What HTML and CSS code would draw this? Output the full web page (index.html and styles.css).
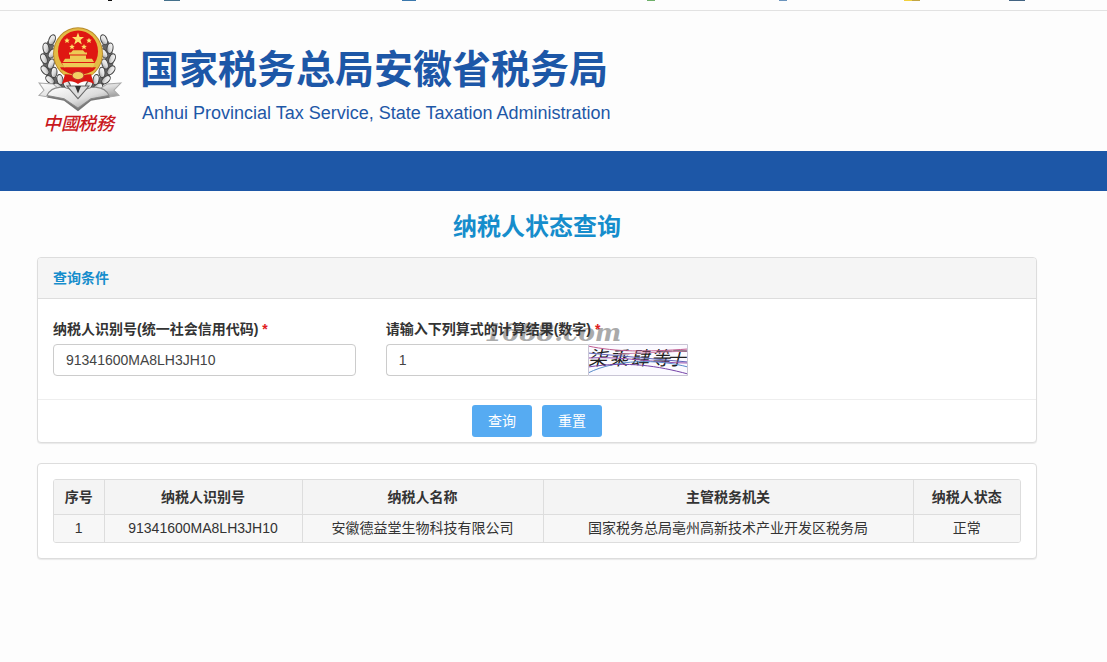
FILE: index.html
```html
<!DOCTYPE html>
<html lang="zh-CN">
<head>
<meta charset="utf-8">
<title>纳税人状态查询</title>
<link rel="stylesheet" href="styles.css">
</head>
<body>
<div class="strip">
  <svg width="1107" height="2" viewBox="0 0 1107 2" aria-hidden="true">
    <path fill="#111" d="M108 0h4v1h-4z"/><path fill="#45718c" d="M164 0h16v1h-16z"/>
    <path fill="#3b78ad" d="M402 0h14v1h-14z"/><path fill="#6fb06a" d="M647 0h8v1h-8z"/>
    <path fill="#6b94bd" d="M779 0h8v1h-8z"/><path fill="#f2d13c" d="M904 0h8v1h-8z"/>
    <path fill="#c2a544" d="M912 0h8v1h-8z"/><path fill="#426382" d="M1009 0h16v1h-16z"/>
  </svg>
</div>
<header class="masthead">
  <svg class="emblem" width="88" height="110" viewBox="0 0 88 110" role="img" aria-label="中国税务">
    <defs>
      <linearGradient id="silver" x1="0" y1="0" x2="1" y2="1">
        <stop offset="0" stop-color="#fff"/><stop offset=".55" stop-color="#ddd"/><stop offset="1" stop-color="#888"/>
      </linearGradient>
      <ellipse id="leaf" rx="3" ry="5" fill="url(#silver)" stroke="#444"/>
      <g id="branch">
        <path d="M15 20C6 36 10 55 32 67" fill="none" stroke="#666" stroke-width="8"/>
        <use href="#leaf" transform="translate(16 17) rotate(25)"/>
        <use href="#leaf" transform="translate(10 25) rotate(-10)"/>
        <use href="#leaf" transform="translate(16 30) rotate(35)"/>
        <use href="#leaf" transform="translate(8 35) rotate(-25)"/>
        <use href="#leaf" transform="translate(15 40) rotate(20)"/>
        <use href="#leaf" transform="translate(9 46) rotate(-42)"/>
        <use href="#leaf" transform="translate(18 48) rotate(5)"/>
        <use href="#leaf" transform="translate(14 55) rotate(-50)"/>
        <use href="#leaf" transform="translate(24 55) rotate(-12)"/>
        <use href="#leaf" transform="translate(22 62) rotate(-60)"/>
        <use href="#leaf" transform="translate(31 60) rotate(-30)"/>
      </g>
    </defs>
    <g transform="translate(-1 -4) scale(1 1.05)">
      <use href="#branch"/>
      <use href="#branch" transform="translate(84 0) scale(-1 1)"/>
      <path d="M3 58l14 1 10 8-4 6-20-3 5-5zM85 58l-14 1-12 8 4 6 20-3-5-5z" fill="url(#silver)" stroke="#aaa"/>
      <path d="M11 72c6-8 16-9 31-1 15-8 25-7 32 1l-19 3-13 10-14-10z" fill="#777"/>
      <path d="M11 70c5-10 18-10 31-2 13-8 26-8 31 2l-18 3-13 9-14-9z" fill="url(#silver)" stroke="#888"/>
      <path d="M31 61l11 12 11-12z" fill="#ddd" stroke="#666"/><path d="M39 61h6l-3 7z" fill="#333"/>
      <circle cx="42" cy="30" r="25" fill="#b98c2c"/>
      <circle cx="42" cy="30" r="24" fill="#e3bb45"/>
      <path d="M24 43l5 7-3 9c7-4 11-3 16 0 5-3 9-4 16 0l-3-9 5-7z" fill="#d91712"/>
      <circle cx="42" cy="28" r="20" fill="#df1712"/>
      <path d="M42 10l1.6 4.2 4.4.1-3.5 2.8 1.3 4.3-3.8-2.5-3.8 2.5 1.3-4.3-3.5-2.8 4.4-.1z" fill="#ffdf68"/>
      <g fill="#ffdf68"><path id="star" d="M31 15l.8 1.7 2 .1-1.5 1.3.5 1.9-1.8-1-1.8 1 .5-1.9-1.5-1.3 2-.1z"/>
        <use href="#star" x="22"/><use href="#star" x="5" y="6"/><use href="#star" x="17" y="6"/></g>
      <path d="M35 29l2-2h10l2 2h2v2H33v-2zM34 32h16v3h6l2 3H27l2-3h5zM26 39h33l-2 4H28z" fill="#edcb55"/>
      <path d="M26 45c5 4 10 5 16 5s12-1 17-5l-2 5c-5-1-11 1-15 3-4-2-10-4-15-3z" fill="#e5bd43"/>
      <ellipse cx="42" cy="51" rx="6" ry="4" fill="#f2d265" stroke="#c0302a"/>
    </g>
    <text class="emblem-text" y="104"><tspan x="6">中</tspan><tspan x="24">國</tspan><tspan x="41">税</tspan><tspan x="59">務</tspan></text>
  </svg>
  <div class="brand">
    <div class="brand-name">国家税务总局安徽省税务局</div>
    <div class="brand-en">Anhui Provincial Tax Service, State Taxation Administration</div>
  </div>
</header>
<nav class="navbar" aria-label="主导航"></nav>
<main class="content">
  <h1 class="page-title">纳税人状态查询</h1>
  <form class="panel">
    <h2 class="panel-heading">查询条件</h2>
    <div class="fields">
      <div class="field">
        <label for="taxpayer">纳税人识别号(统一社会信用代码) <span class="required">*</span></label>
        <input class="control" id="taxpayer" type="text" value="91341600MA8LH3JH10">
      </div>
      <div class="field">
        <span class="watermark" aria-hidden="true">1688.com</span>
        <label for="answer">请输入下列算式的计算结果(数字) <span class="required">*</span></label>
        <div class="control-group">
          <input class="control" id="answer" type="text" value="1">
          <svg class="captcha" width="100" height="32" viewBox="0 0 100 32" role="img" aria-label="柒乘肆等于">
            <rect width="100" height="32" fill="#fbfaff"/>
            <text class="captcha-text" y="21"><tspan x="0">柒</tspan><tspan x="21">乘</tspan><tspan x="42">肆</tspan><tspan x="63">等</tspan><tspan x="79">于</tspan></text>
            <g fill="none">
              <path stroke="#c05c91" d="M0 2c28 6 58 6 100 3"/>
              <path stroke="#6265b9" d="M0 9l100 9"/>
              <path stroke="#9851ae" d="M0 14c35-2 65 5 100 5"/>
              <path stroke="#588bc8" d="M0 29C28 15 70 15 100 23"/>
              <path stroke="#7643a8" d="M0 23c40-6 70-1 100 7"/>
              <path stroke="#cb83aa" d="M30 10l70-3"/>
            </g>
            <path d="M.5.5h99v31H.5z" fill="none" stroke="#c9c5d5"/>
          </svg>
        </div>
      </div>
    </div>
    <div class="actions">
      <button class="btn" type="button">查询</button>
      <button class="btn" type="reset">重置</button>
    </div>
  </form>
  <section class="panel results">
    <div class="table-frame">
      <table class="table">
        <colgroup><col class="col-no"><col class="col-id"><col class="col-name"><col class="col-office"><col class="col-status"></colgroup>
        <thead><tr><th>序号</th><th>纳税人识别号</th><th>纳税人名称</th><th>主管税务机关</th><th>纳税人状态</th></tr></thead>
        <tbody><tr><td>1</td><td>91341600MA8LH3JH10</td><td>安徽德益堂生物科技有限公司</td><td>国家税务总局亳州高新技术产业开发区税务局</td><td>正常</td></tr></tbody>
      </table>
    </div>
  </section>
</main>
</body>
</html>
```

FILE: styles.css
```css
* { box-sizing: border-box; }
body {
  margin: 0;
  background: #fdfdfd;
  color: #333;
  font: 14px/20px "Liberation Sans", "Noto Sans CJK SC", sans-serif;
}
.strip { height: 11px; overflow: hidden; border-bottom: 1px solid #e2e2e2; }
.strip svg { display: block; }
.masthead { display: flex; height: 140px; padding: 15px 37px; gap: 15px; color: #1d57a7; }
.emblem { flex: none; }
.emblem-text { font: italic 500 18px "Noto Sans CJK TC", sans-serif; fill: #c9191e; }
.brand { padding-top: 14px; white-space: nowrap; }
.brand-name { font-size: 39px; line-height: 60px; font-weight: bold; }
.brand-en { padding-left: 2px; font-size: 18px; line-height: 26px; }
.navbar { height: 40px; background: #1d57a7; }
.content { padding: 19px 70px 40px 37px; }
.page-title { margin: 0 0 13px; color: #168dcc; font-size: 24px; line-height: 34px; text-align: center; }
.panel {
  margin-bottom: 20px;
  background: #fff;
  border: 1px solid #ddd;
  border-radius: 4px;
  box-shadow: 0 1px 1px rgba(0, 0, 0, .08);
}
.panel-heading {
  margin: 0;
  padding: 10px 15px;
  background: #f5f5f5;
  border-bottom: 1px solid #ddd;
  border-radius: 3px 3px 0 0;
  color: #168dcc;
  font-size: 14px;
  line-height: 20px;
}
.fields { display: grid; grid-template-columns: repeat(3, 1fr); gap: 30px; padding: 20px 15px 23px; }
.field { position: relative; }
.field label { position: relative; display: block; margin-bottom: 5px; font-weight: bold; white-space: nowrap; }
.required { color: #e02020; }
.watermark {
  position: absolute;
  top: 0;
  left: 99px;
  color: #aaa;
  font: italic bold 25px/28px "DejaVu Serif", serif;
}
.control {
  display: block;
  width: 100%;
  height: 32px;
  padding: 5px 12px;
  border: 1px solid #ccc;
  border-radius: 4px;
  background: #fff;
  color: #444;
  font: inherit;
}
.control-group { position: relative; display: flex; }
.control-group .control { flex: 1; min-width: 0; border-right: 0; border-radius: 4px 0 0 4px; }
.captcha { flex: none; }
.captcha-text { font: italic 19px "Noto Sans CJK SC", sans-serif; fill: #222; }
.actions { display: flex; justify-content: center; gap: 10px; padding: 5px; border-top: 1px solid #eee; }
.btn {
  width: 60px;
  height: 32px;
  padding: 0;
  border: 0;
  border-radius: 3px;
  background: #56abf2;
  color: #fff;
  font: inherit;
}
.results { padding: 15px; }
.table-frame { border: 1px solid #ddd; border-radius: 3px; overflow: hidden; }
.table { width: 100%; table-layout: fixed; border-collapse: collapse; background: #f7f7f7; text-align: center; }
.table th, .table td { padding: 0; border-left: 1px solid #ddd; }
.table th { height: 34px; background: #f4f4f4; }
.table td { height: 28px; border-top: 1px solid #ddd; }
.table th:first-child, .table td:first-child { border-left: 0; }
.col-no { width: 50px; }
.col-id { width: 198px; }
.col-name { width: 241px; }
.col-status { width: 107px; }
```
